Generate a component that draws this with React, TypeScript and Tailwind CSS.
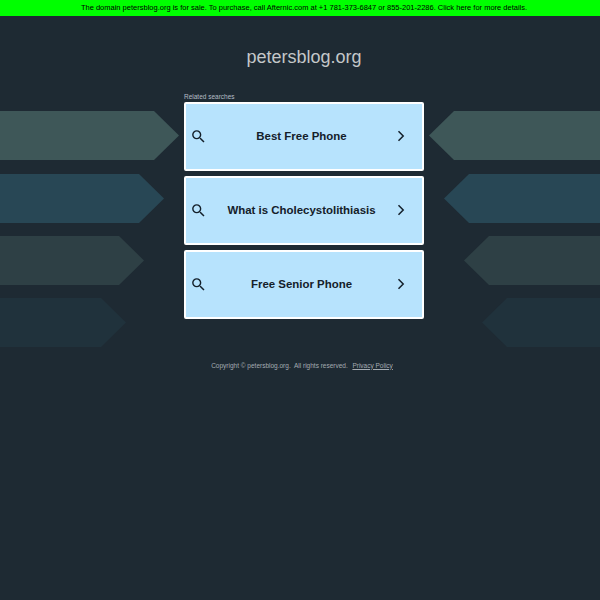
const searches = ['Best Free Phone', 'What is Cholecystolithiasis', 'Free Senior Phone'];

const leftArrows = [
  { top: 'top-[111px]', width: 179, fill: '#3e5758' },
  { top: 'top-[174px]', width: 164, fill: '#284755' },
  { top: 'top-[236px]', width: 144, fill: '#2e4045' },
  { top: 'top-[298px]', width: 126, fill: '#20323c' },
];

const rightArrows = [
  { top: 'top-[111px]', width: 171, fill: '#3e5758' },
  { top: 'top-[174px]', width: 156, fill: '#284755' },
  { top: 'top-[236px]', width: 136, fill: '#2e4045' },
  { top: 'top-[298px]', width: 118, fill: '#20323c' },
];

function Arrow({ width, fill, flip }: { width: number; fill: string; flip?: boolean }) {
  const points = flip
    ? `25,0 ${width},0 ${width},49 25,49 0,24.5`
    : `0,0 ${width - 25},0 ${width},24.5 ${width - 25},49 0,49`;
  return (
    <svg width={width} height={49} viewBox={`0 0 ${width} 49`} className="block">
      <polygon points={points} fill={fill} />
    </svg>
  );
}

function SearchIcon() {
  return (
    <svg width="17" height="17" viewBox="0 0 24 24" fill="currentColor" className="shrink-0">
      <path d="M15.5 14h-.79l-.28-.27A6.471 6.471 0 0 0 16 9.5 6.5 6.5 0 1 0 9.5 16c1.61 0 3.09-.59 4.23-1.57l.27.28v.79l5 4.99L20.49 19l-4.99-5zm-6 0C7.01 14 5 11.99 5 9.5S7.01 5 9.5 5 14 7.01 14 9.5 11.99 14 9.5 14z" />
    </svg>
  );
}

function ChevronIcon() {
  return (
    <svg width="10" height="14" viewBox="0 0 10 14" fill="none" stroke="currentColor" strokeWidth="1.5" className="shrink-0">
      <polyline points="2.5,2.3 7.2,7 2.5,11.7" />
    </svg>
  );
}

export default function App() {
  return (
    <div className="relative min-h-[600px] overflow-hidden bg-[#1e2a33] font-['Liberation_Sans',sans-serif]">
      {leftArrows.map((a) => (
        <div key={a.top} className={`absolute left-0 ${a.top}`}>
          <Arrow width={a.width} fill={a.fill} />
        </div>
      ))}
      {rightArrows.map((a) => (
        <div key={a.top} className={`absolute right-0 ${a.top}`}>
          <Arrow width={a.width} fill={a.fill} flip />
        </div>
      ))}

      <div className="h-4 bg-[#00ff00] pl-[8px] text-center text-[7.5px] leading-4 text-black">
        The domain petersblog.org is for sale. To purchase, call Afternic.com at +1 781-373-6847 or 855-201-2286. Click here for more details.
      </div>

      <div className="relative flex flex-col items-center">
        <h1 className="mt-[30px] h-[22px] pl-[8px] text-center text-[18px] leading-[22px] font-normal text-[#c4c7c9]">
          petersblog.org
        </h1>

        <div className="mt-[21.5px] ml-[8px] w-[240px]">
          <div className="h-[12px] text-[6.5px] leading-[14px] text-[#b4bcc4]">Related searches</div>
          <div className="flex flex-col gap-[5px]">
            {searches.map((s) => (
              <div
                key={s}
                className="flex h-[69px] items-center rounded-[2px] border-2 border-white bg-[#b7e3fd] pr-[16px] pl-[4px] text-[#14202a]"
              >
                <SearchIcon />
                <span className="flex-1 pt-[1px] text-center text-[11.45px] font-bold">{s}</span>
                <ChevronIcon />
              </div>
            ))}
          </div>
        </div>

        <div className="mt-[42px] pl-[4px] text-center text-[6.5px] text-[#a4abb2]">
          Copyright © petersblog.org.&nbsp; All rights reserved.&nbsp; <span className="ml-[1px] underline">Privacy Policy</span>
        </div>
      </div>
    </div>
  );
}
